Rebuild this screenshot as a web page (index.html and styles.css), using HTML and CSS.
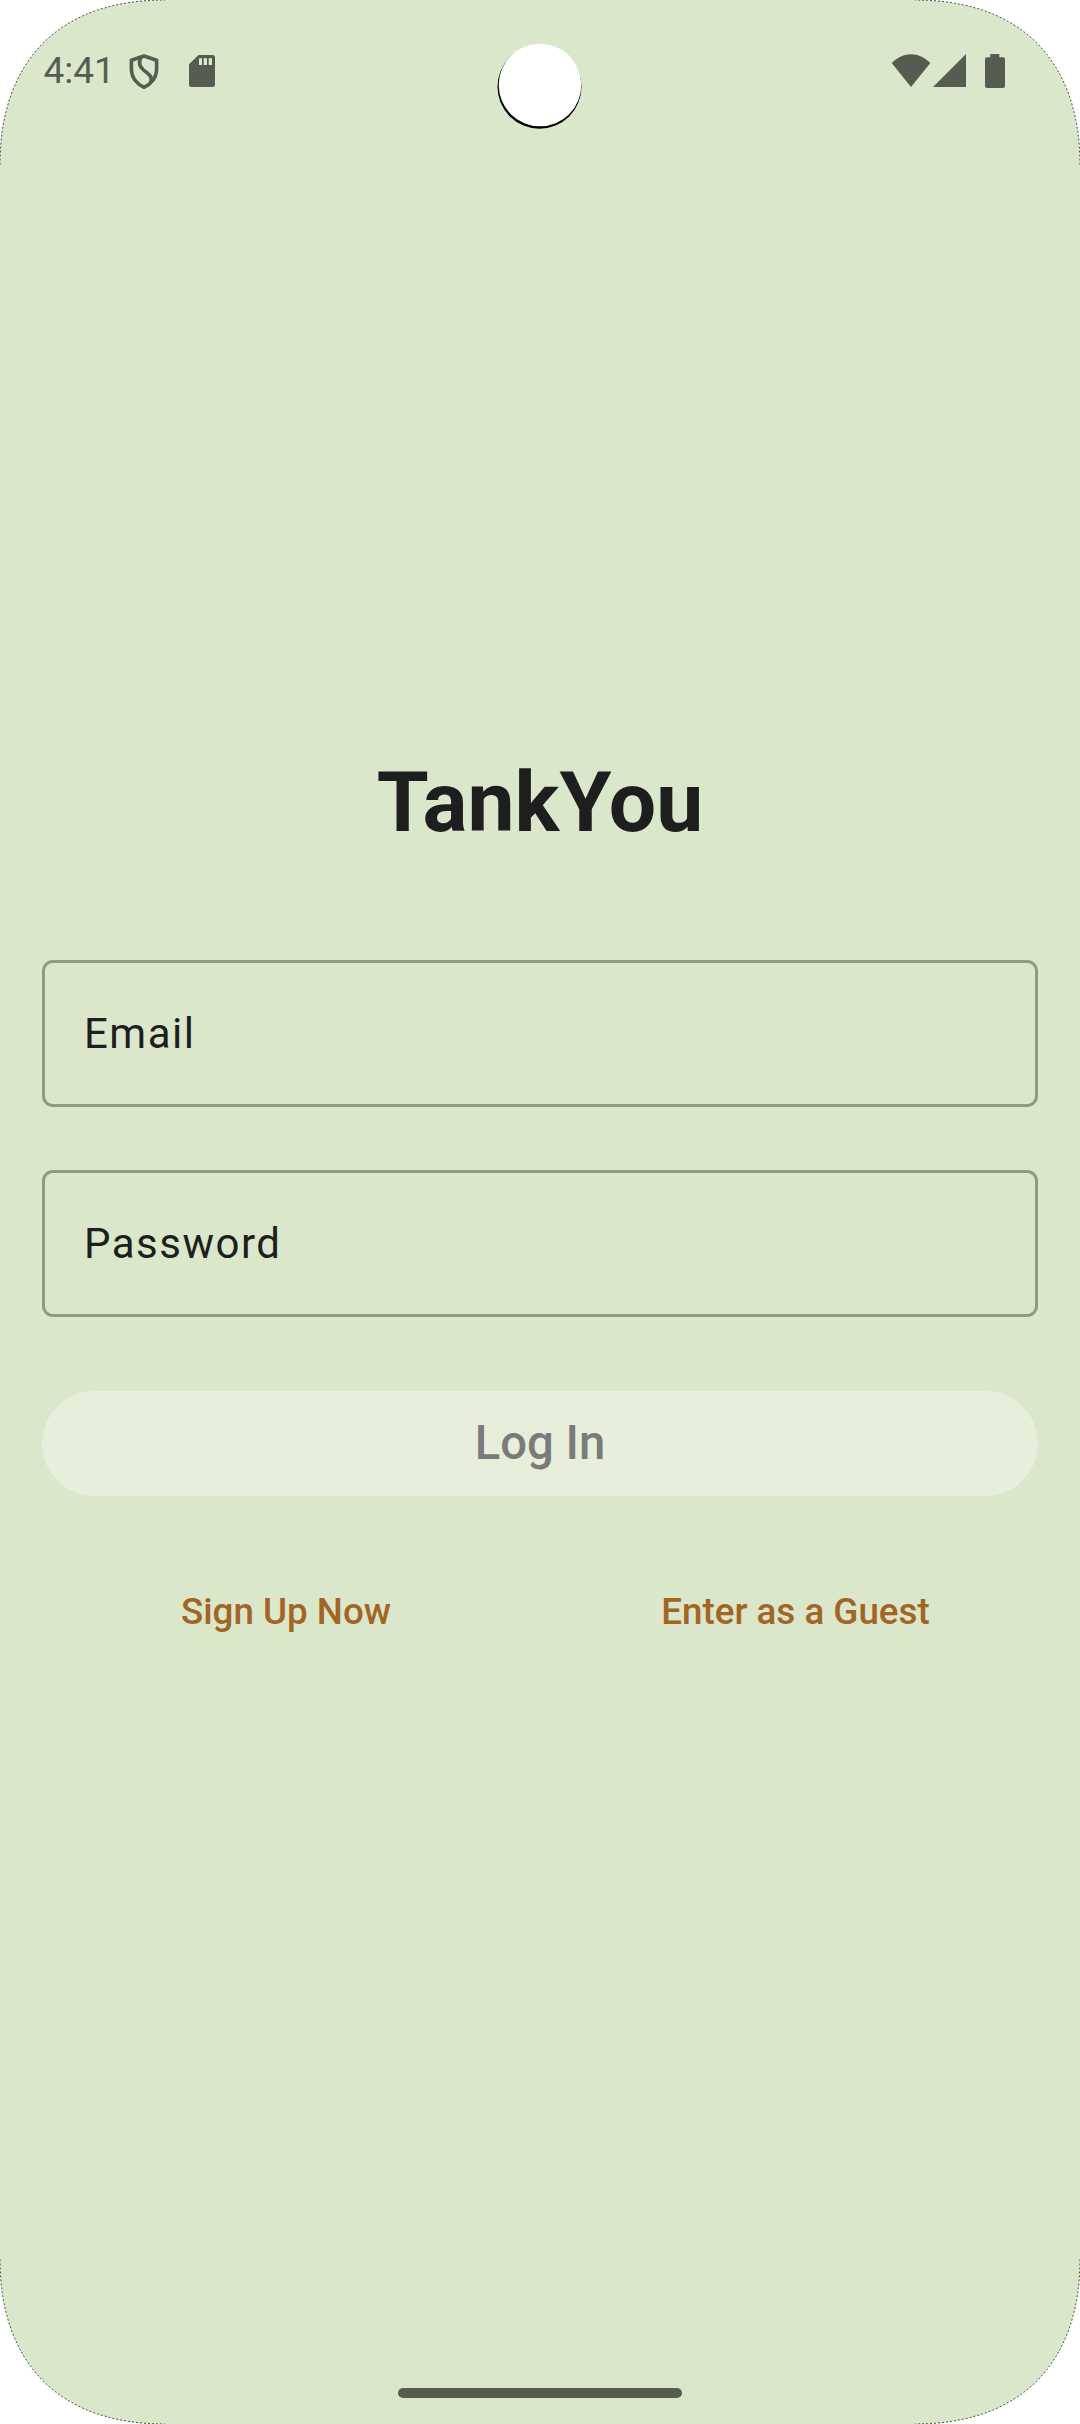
FILE: index.html
```html
<!DOCTYPE html>
<html lang="en">
<head>
<meta charset="utf-8">
<title>TankYou</title>
<link rel="stylesheet" href="styles.css">
</head>
<body>
<div class="screen">
  <header class="status-bar">
    <span class="clock">4:41</span>
    <svg class="icon-shield" width="30" height="36" viewBox="0 0 30 36" fill="none" stroke="currentColor" stroke-width="3.600" stroke-linejoin="round"><path d="M15 2 L27.600 6.300 V15 C27.600 24 21.500 30.500 15 33.300 C8.500 30.500 2.400 24 2.400 15 V6.300 Z"/><path d="M12 3.500 C9.500 8 10.500 12.500 14.500 16 C18.500 19.500 24.500 22 21.500 28.500"/></svg>
    <svg class="icon-card" width="26" height="32" viewBox="0 0 26 32" fill="currentColor"><path fill-rule="evenodd" d="M9.500 0 H23.500 Q26 0 26 2.500 V29.500 Q26 32 23.500 32 H2.500 Q0 32 0 29.500 V9.300 Z M10 3.300 V10 H13 V3.300 Z M14.700 3.300 V10 H18 V3.300 Z M19.700 3.300 V10 H23 V3.300 Z"/></svg>
    <svg class="icon-wifi" width="40" height="34" viewBox="0 0 40 34" fill="currentColor"><path d="M0.700 9 C12 -2.700 28 -2.700 39.300 9 L20 33 Z"/></svg>
    <svg class="icon-signal" width="34" height="34" viewBox="0 0 34 34" fill="currentColor"><path d="M33 0 V33 H0 Z"/></svg>
    <svg class="icon-battery" width="20" height="34" viewBox="0 0 20 34" fill="currentColor"><path d="M5.300 0 H14.300 V3.300 H18 Q20 3.300 20 5.300 V32 Q20 34 18 34 H2 Q0 34 0 32 V5.300 Q0 3.300 2 3.300 H5.300 Z"/></svg>
  </header>
  <main class="login">
    <h1 class="title">TankYou</h1>
    <div class="field">Email</div>
    <div class="field">Password</div>
    <button class="login-button" disabled>Log In</button>
    <nav class="links">
      <a class="link">Sign Up Now</a>
      <a class="link">Enter as a Guest</a>
    </nav>
  </main>
  <div class="nav-handle"></div>
  <svg class="bezel" width="1080" height="2424" viewBox="0 0 1080 2424">
    <defs><path id="corner" d="M-2 -2 H165 V0 C60 0 0 60 0 165 H-2 Z"/></defs>
    <g fill="#fff" stroke="#222" stroke-width="0.8" stroke-dasharray="2 2">
      <use href="#corner"/>
      <use href="#corner" transform="translate(1080 0) scale(-1 1)"/>
      <use href="#corner" transform="translate(0 2424) scale(1 -1)"/>
      <use href="#corner" transform="translate(1080 2424) scale(-1 -1)"/>
    </g>
    <circle cx="539.500" cy="86.700" r="42" fill="#000"/>
    <circle cx="540" cy="85" r="41.300" fill="#fff"/>
  </svg>
</div>
</body>
</html>
```
FILE: styles.css
```css
* { box-sizing: border-box; }
body { margin: 0; font-family: Roboto, sans-serif; background: #fff; }
.screen {
  position: relative;
  display: flex;
  flex-direction: column;
  width: 1080px;
  height: 2424px;
  overflow: hidden;
  background: #dae7cb;
}
.status-bar {
  display: flex;
  align-items: flex-start;
  height: 142px;
  padding: 54px 75px 0 43px;
  color: #565c50;
}
.clock { width: 86px; padding-left: 0.5px; font-size: 37px; line-height: 34px; }
.icon-card { margin: 1px 0 0 30px; }
.icon-wifi { margin-left: auto; }
.icon-signal { margin-left: 2px; }
.icon-battery { margin-left: 18px; }
.login {
  display: flex;
  flex: 1;
  flex-direction: column;
  padding: 611px 42px 0;
}
.title {
  margin: 0 0 107px;
  font-size: 84px;
  line-height: 100px;
  font-weight: 700;
  text-align: center;
  color: #1e1e1e;
}
.field {
  height: 147px;
  margin-bottom: 63px;
  padding-left: 39px;
  border: 3px solid #8f9c80;
  border-radius: 11px;
  font-size: 42px;
  line-height: 141px;
  letter-spacing: 1.5px;
  color: #1e1e1e;
}
.login-button {
  height: 105px;
  margin-top: 11px;
  padding: 0;
  border: 0;
  border-radius: 53px;
  background: #e7efdb;
  font: 500 47.25px/105px Roboto, sans-serif;
  color: #7b7b7b;
}
.links {
  display: grid;
  grid-template-columns: 488px 485px;
  justify-content: space-between;
  margin-top: 95px;
  text-align: center;
}
.link { font-size: 36.75px; line-height: 42px; font-weight: 500; color: #a26524; }
.nav-handle {
  align-self: center;
  width: 284px;
  height: 10px;
  margin-bottom: 26px;
  border-radius: 5px;
  background: #565c50;
}
.bezel { position: absolute; inset: 0; }
```
